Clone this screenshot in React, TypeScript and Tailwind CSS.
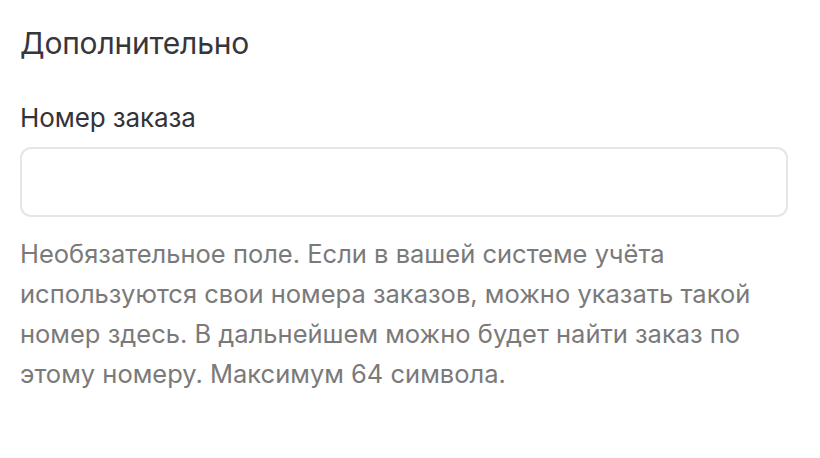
export default function App() {
  return (
    <div className="min-h-screen bg-white pl-5 pr-8 pt-[25px] font-['Inter',sans-serif]">
      <h2 className="text-[30px] leading-[36px] font-normal tracking-[-0.2px] text-[#36363c]">Дополнительно</h2>

      <label className="mt-[41px] block text-[26px] leading-[32px] tracking-[-0.1px] text-[#333338]">Номер заказа</label>
      <input
        type="text"
        className="mt-[13px] block h-[70px] w-full rounded-[11px] border-2 border-[#e6e6e6] bg-white px-4 text-[22px] outline-none"
      />

      <p className="mt-[17px] max-w-[740px] text-[25.5px] leading-[40px] text-[#7a7a7a]">
        Необязательное поле. Если в вашей системе учёта используются свои номера заказов, можно указать такой
        номер здесь. В дальнейшем можно будет найти заказ по этому номеру. Максимум 64 символа.
      </p>
    </div>
  );
}
